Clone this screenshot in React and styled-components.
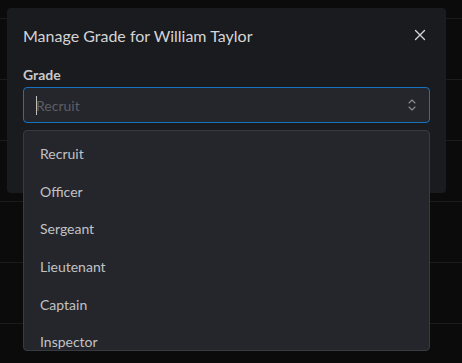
import React from 'react';
import styled, { createGlobalStyle } from 'styled-components';

const GlobalStyle = createGlobalStyle`
    html, body {
        margin: 0;
        padding: 0;
        background: #0b0b0b;
        font-family: Lato, "Open Sans", sans-serif;
    }
    * {
        box-sizing: border-box;
    }
`;

const Page = styled.div`
    position: relative;
    width: 462px;
    height: 363px;
    overflow: hidden;
    background: #0b0b0b;
`;

const Backdrop = styled.div`
    padding-top: 18px;
`;

const BackRow = styled.div`
    height: 61px;
    border-top: 1px solid #1c1c1d;
`;

const Modal = styled.div`
    position: absolute;
    top: 8px;
    left: 7px;
    width: 439px;
    height: 185px;
    background: #1a1b1e;
    border-radius: 4px;
    padding: 0 16px;
`;

const Header = styled.div`
    display: flex;
    align-items: center;
    justify-content: space-between;
    height: 54px;
`;

const Title = styled.h2`
    margin: 0;
    font-size: 16px;
    font-weight: 400;
    color: #d4d4d6;
`;

const CloseButton = styled.button`
    display: flex;
    align-items: center;
    justify-content: center;
    width: 28px;
    height: 28px;
    margin-right: -4px;
    background: none;
    border: none;
    padding: 0;
    cursor: pointer;
`;

const Label = styled.label`
    display: block;
    font-size: 14px;
    font-weight: 700;
    color: #c9c9cb;
    margin-top: 3px;
    line-height: 20px;
    margin-bottom: 2px;
`;

const Input = styled.div`
    position: relative;
    display: flex;
    align-items: center;
    height: 36px;
    background: #25262b;
    border: 1px solid #1971c2;
    border-radius: 4px;
    padding: 0 12px;
`;

const Caret = styled.span`
    width: 1px;
    height: 19px;
    background: #c1c2c5;
    margin-right: -1px;
`;

const Placeholder = styled.span`
    font-size: 14px;
    color: #5c5f66;
`;

const Chevrons = styled.span`
    margin-left: auto;
    display: flex;
    margin-right: 1px;
`;

const Dropdown = styled.div`
    position: absolute;
    top: 130px;
    left: 23px;
    width: 407px;
    height: 221px;
    background: #25262b;
    border: 1px solid #373a40;
    border-radius: 4px;
    padding: 4px;
    overflow: hidden;
`;

const Option = styled.div`
    height: 37.6px;
    display: flex;
    align-items: center;
    padding: 0 12px;
    font-size: 14px;
    color: #c1c2c5;
    border-radius: 4px;
`;

const grades = ['Recruit', 'Officer', 'Sergeant', 'Lieutenant', 'Captain', 'Inspector'];

const App = () => {
    return (
        <>
            <GlobalStyle />
            <Page>
                <Backdrop>
                    {[0, 1, 2, 3, 4, 5].map((r) => <BackRow key={r} />)}
                </Backdrop>
                <Modal>
                    <Header>
                        <Title>Manage Grade for William Taylor</Title>
                        <CloseButton aria-label="Close">
                            <svg width="12" height="12" viewBox="0 0 12 12">
                                <path d="M1.5 1.5 L10.5 10.5 M10.5 1.5 L1.5 10.5" stroke="#d4d4d6" strokeWidth="1.4" strokeLinecap="round" />
                            </svg>
                        </CloseButton>
                    </Header>
                    <Label>Grade</Label>
                    <Input>
                        <Caret />
                        <Placeholder>Recruit</Placeholder>
                        <Chevrons>
                            <svg width="8" height="14" viewBox="0 0 8 14">
                                <path d="M1 5 L4 2 L7 5 M1 9 L4 12 L7 9" fill="none" stroke="#8a8d93" strokeWidth="1.1" strokeLinecap="round" strokeLinejoin="round" />
                            </svg>
                        </Chevrons>
                    </Input>
                </Modal>
                <Dropdown>
                    {grades.map((g) => <Option key={g}>{g}</Option>)}
                </Dropdown>
            </Page>
        </>
    );
};

export default App;
